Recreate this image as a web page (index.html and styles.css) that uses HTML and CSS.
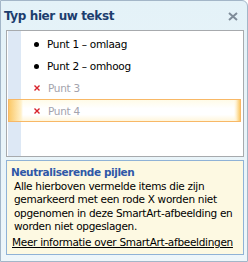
FILE: index.html
```html
<!DOCTYPE html>
<html lang="nl">
<head>
    <meta charset="UTF-8">
    <title>Typ hier uw tekst</title>
    <link rel="stylesheet" href="styles.css">
</head>
<body>
    <div class="pane">
        <div class="pane-header">
            <span class="pane-title">Typ hier uw tekst</span>
            <svg class="close" width="10" height="9" viewBox="0 0 10 9">
                <path d="M1 1 L9 8 M9 1 L1 8" stroke="#7f8c99" stroke-width="2"/>
            </svg>
        </div>

        <!-- Text list -->
        <div class="textlist">
            <div class="row"><span class="bullet"></span>Punt 1 – omlaag</div>
            <div class="row"><span class="bullet"></span>Punt 2 – omhoog</div>
            <div class="row removed">
                <svg class="cross" width="6" height="6" viewBox="0 0 6 6"><path d="M0.5 0.5 L5.5 5.5 M5.5 0.5 L0.5 5.5" stroke="#d8222a" stroke-width="1.4"/></svg>Punt 3
            </div>
            <div class="row removed selected">
                <svg class="cross" width="6" height="6" viewBox="0 0 6 6"><path d="M0.5 0.5 L5.5 5.5 M5.5 0.5 L0.5 5.5" stroke="#d8222a" stroke-width="1.4"/></svg>Punt 4
            </div>
        </div>

        <!-- Info box -->
        <div class="info">
            <div class="info-title">Neutraliserende pijlen</div>
            <p>Alle hierboven vermelde items die zijn gemarkeerd met een rode X worden niet opgenomen in deze SmartArt-afbeelding en worden niet opgeslagen.</p>
            <a class="info-link" href="#">Meer informatie over SmartArt-afbeeldingen</a>
        </div>
    </div>
</body>
</html>
```

FILE: styles.css
```css
body {
    margin: 0;
    font-family: 'DejaVu Sans', 'Liberation Sans', sans-serif;
    font-size: 10.5px;
    letter-spacing: -0.3px;
    color: #000;
}

.pane {
    width: 248px;
    height: 262px;
    box-sizing: border-box;
    border: 1px solid #a3b6c8;
    border-top-right-radius: 6px;
    background: linear-gradient(to bottom, #e4f2f8, #edf6fa);
}

.pane-header {
    height: 29px;
    display: flex;
    align-items: center;
    justify-content: space-between;
    padding: 0 9px 0 3px;
}

.pane-title {
    font-size: 12px;
    font-weight: bold;
    letter-spacing: -0.4px;
    color: #1c3d6e;
    margin-top: 1px;
}

.close {
    margin-top: 2px;
}

/* Text list */
.textlist {
    margin: 0 3px 0 5px;
    height: 127px;
    box-sizing: border-box;
    border: 1px solid #a7aaad;
    padding-top: 2px;
    background: linear-gradient(to right, #fff 1px, #dde8f5 1px, #dde8f5 14px, #fff 14px);
}

.row {
    height: 22px;
    margin: 0 2px 0 1px;
    box-sizing: border-box;
    display: flex;
    align-items: center;
    padding-left: 26px;
}

.bullet {
    width: 5px;
    height: 5px;
    border-radius: 50%;
    background: #000;
    margin-right: 8px;
}

.cross {
    margin-right: 8px;
}

.removed {
    color: #a3a3ad;
}

.selected {
    height: 23px;
    border: 1px solid #f8b866;
    padding-left: 25px;
    background:
        linear-gradient(to right, #fbc969, #fff0c8 12px, transparent 14px),
        linear-gradient(to left, #fbc969, #fff3d6 4px, transparent 6px),
        linear-gradient(to bottom, #fffbe8, #fff 40%, #fff 70%, #fff6dc);
}

/* Info box */
.info {
    margin: 3px 3px 0 5px;
    height: 95px;
    box-sizing: border-box;
    border: 1px solid #8fb2d6;
    background: #fdf9e2;
    padding: 5px 4px 0 4px;
}

.info-title {
    font-weight: bold;
    color: #2f58a8;
    font-size: 10.5px;
    letter-spacing: -0.4px;
    margin-bottom: 2px;
}

.info p {
    margin: 0 0 2px 3px;
    line-height: 13.4px;
}

.info-link {
    color: #000;
    margin-left: 1px;
}
```
